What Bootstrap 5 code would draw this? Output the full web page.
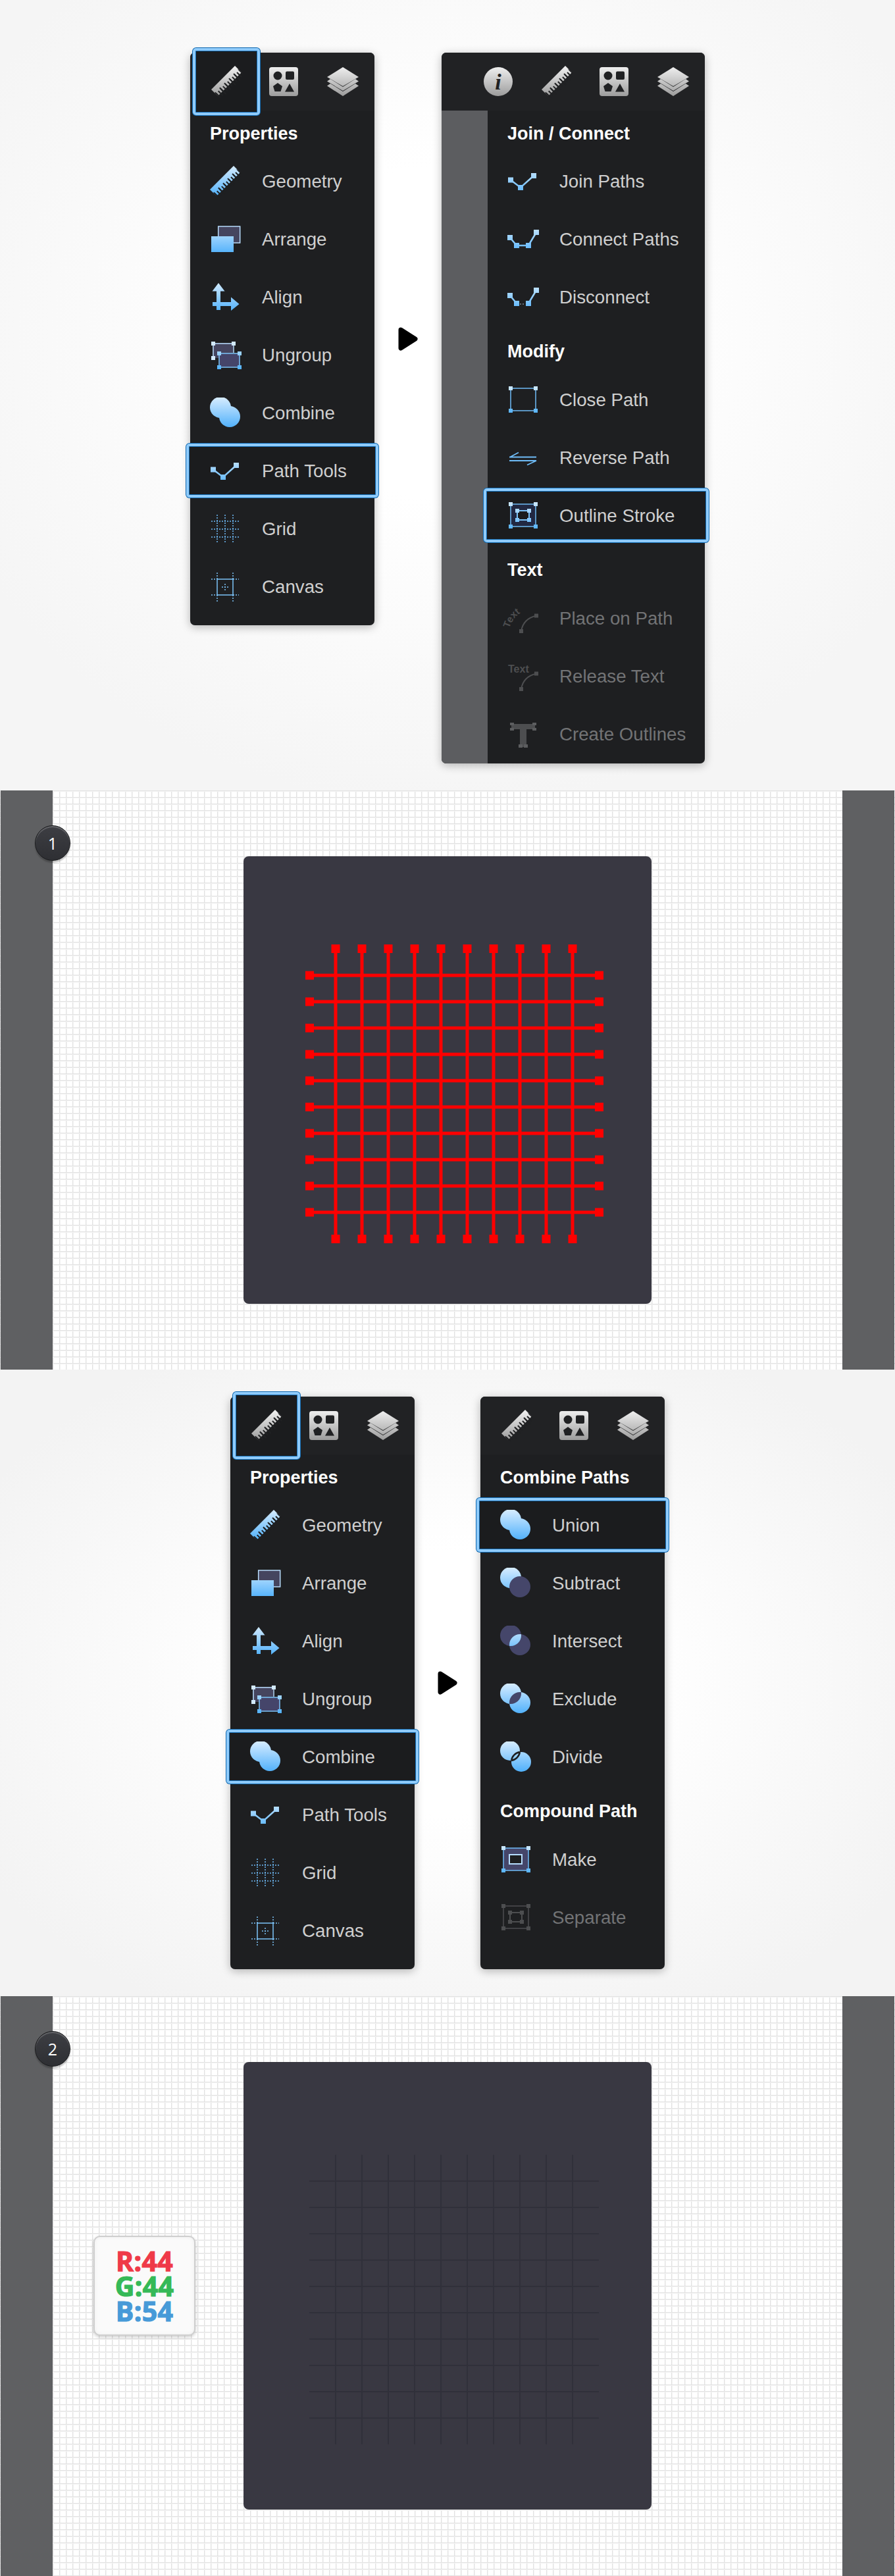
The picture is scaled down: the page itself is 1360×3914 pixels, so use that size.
<!DOCTYPE html>
<html lang="en">
<head>
  <meta charset="UTF-8">
  <title>Grid tutorial</title>
  <link rel="stylesheet" href="https://cdn.jsdelivr.net/npm/bootstrap@5.3.0/dist/css/bootstrap.min.css">
  <style>
    body { background: #f4f4f4; font-family: "Liberation Sans", Arial, sans-serif; }
    .icon-defs { position: absolute; width: 0; height: 0; }

    /* light blocks that hold the panels */
    .step-top { height: 1201px; padding-top: 80px; background: radial-gradient(ellipse 60% 60% at 50% 42%, #fff 35%, #f5f5f5 100%); }
    .step-mid { height: 952px; padding-top: 41px; background: radial-gradient(ellipse 60% 60% at 50% 50%, #fff 35%, #f3f3f3 100%); }

    /* panels */
    .tool-panel { background: #1e1f21; border-radius: 7px; box-shadow: 0 3px 14px rgba(0,0,0,.28); }
    .w-narrow { width: 280px; height: 870px; }
    .w-wide { width: 400px; height: 1080px; }
    .tab-bar { height: 88px; padding-right: 4px; background: #212224; border-radius: 7px 7px 0 0; }
    .tab-cell { width: 88px; height: 88px; }
    .tab-cell svg { width: 48px; height: 48px; }
    .gap-strip { width: 70px; background: #5c5d60; border-radius: 0 0 0 7px; }
    .tool-title { margin: 0; padding: 18px 0 11px 30px; height: 63px; font-size: 27px; line-height: 34px; font-weight: 700; color: #fff; }
    .tool-title.later { height: 68px; padding-top: 22px; padding-bottom: 12px; }
    .tool-row { --bs-list-group-bg: transparent; --bs-list-group-color: #cfcfcf; --bs-list-group-border-width: 0; height: 88px; padding: 1px 0 0 30px; font-size: 27.7px; display: flex; align-items: center; }
    .tool-row svg { width: 48px; height: 48px; margin-right: 31px; flex: none; overflow: visible; }
    .tool-row.off { --bs-list-group-color: #727375; }
    .picked { position: relative; isolation: isolate; }
    .picked::before { content: ""; position: absolute; z-index: -1; top: 3px; bottom: 3px; left: -6px; right: -6px; background: #1b1c1e; border: 4px solid #8fcbfa; border-radius: 5px; box-shadow: 0 0 0 1px #1069b1, inset 0 0 0 1px #1069b1; }
    .tab-cell.picked::before { top: -7px; bottom: -7px; left: -8px; right: -6px; }
    .go-arrow { height: 870px; }
    .gap-l { width: 102px; }
    .gap-s { width: 100px; }
    .go-arrow svg { width: 32px; height: 36px; }

    /* grid canvases */
    .grid-sheet { position: relative; background-color: #fff;
      background-image:
        linear-gradient(#e2e2e2 1px, #f3f3f3 1px, #f3f3f3 2px, transparent 2px),
        linear-gradient(90deg, #e2e2e2 1px, #f3f3f3 1px, #f3f3f3 2px, transparent 2px);
      background-size: 10px 10px; }
    .sheet-a { height: 880px; }
    .sheet-b { height: 881px; }
    .side-strip { width: 79px; background: #5f6062; }
    .side-strip.lft { margin-left: 1px; }
    .side-strip.rgt { margin-right: 1px; }
    .art-board { width: 620px; height: 680px; margin-top: 100px; background: #393842; border-radius: 8px; }
    .art-board svg { width: 620px; height: 680px; }
    .step-dot { position: absolute; left: 53px; top: 53px; width: 54px; height: 54px; background: linear-gradient(#3d3e43, #2e2f33); border: 1px solid #17181a; box-shadow: inset 0 2px 1px rgba(255,255,255,.22), 0 3px 2px rgba(0,0,0,.22); font: 400 25px "Open Sans", sans-serif; }
    .rgb-card { position: absolute; left: 142px; top: 364px; width: 155px; height: 152px; background: #fafafa; border: 2px solid #cfcfcf; border-radius: 10px; box-shadow: 0 2px 5px rgba(0,0,0,.2), inset 0 0 6px rgba(0,0,0,.05); font: 700 41px/38px "Open Sans", sans-serif; }
    .rgb-card div { -webkit-text-stroke: 1.2px; letter-spacing: .3px; }
    .rgb-r { color: #ef3a48; -webkit-text-stroke-color: #b9152a; }
    .rgb-g { color: #35b957; -webkit-text-stroke-color: #108a37; }
    .rgb-b { color: #479ad8; -webkit-text-stroke-color: #17629e; }
  </style>
</head>
<body>

<!-- shared icons -->
<svg class="icon-defs" xmlns="http://www.w3.org/2000/svg">
  <defs>
    <linearGradient id="bl" gradientUnits="userSpaceOnUse" x1="0" y1="0" x2="0" y2="46"><stop offset="0" stop-color="#d6ecff"/><stop offset="1" stop-color="#4fb0fb"/></linearGradient>
    <linearGradient id="gr" gradientUnits="userSpaceOnUse" x1="0" y1="0" x2="0" y2="46"><stop offset="0" stop-color="#f2f2f2"/><stop offset="1" stop-color="#9c9c9c"/></linearGradient>
    <clipPath id="c1"><circle cx="16" cy="15" r="16"/></clipPath>
    <clipPath id="c2"><circle cx="30" cy="29" r="16"/></clipPath>
    <clipPath id="d1"><circle cx="15" cy="14" r="15"/></clipPath>
    <clipPath id="d2"><circle cx="32" cy="31" r="15"/></clipPath>
  </defs>

  <!-- tabs -->
  <symbol id="t-ruler" viewBox="0 0 48 48">
    <path fill="url(#gr)" d="M0 36 36 0l10 10-36 36z"/>
    <path stroke="#202123" stroke-width="10" stroke-dasharray="2 3" d="M10 46 46 10"/>
    <path stroke="#202123" stroke-width="14" stroke-dasharray="2 8" d="M10 46 46 10"/>
  </symbol>
  <symbol id="t-shapes" viewBox="0 0 48 48">
    <rect y="2" width="44" height="44" rx="4" fill="url(#gr)"/>
    <circle cx="13" cy="15" r="6.500" fill="#202123"/>
    <rect x="25" y="8.500" width="13" height="12.500" rx="2" fill="#202123"/>
    <path fill="#202123" d="M13 26l7 5-2.500 8h-9L6 31z"/>
    <path fill="#202123" d="M31 27l7 12.500H24z"/>
  </symbol>
  <symbol id="t-layers" viewBox="0 0 48 48">
    <path fill="url(#gr)" d="M24 2l24 15-24 14L0 17z"/>
    <path fill="url(#gr)" d="M5 20l19 12 19-12 5 3.500L24 38 0 23.500z"/>
    <path fill="url(#gr)" d="M5 27l19 12 19-12 5 3.500L24 46 0 30.500z"/>
  </symbol>

  <!-- blue row icons -->
  <symbol id="i-ruler" viewBox="0 0 48 48">
    <path fill="url(#bl)" d="M0 36 36 0l10 10-36 36z"/>
    <path stroke="#1e1f21" stroke-width="10" stroke-dasharray="2 3" d="M10 46 46 10"/>
    <path stroke="#1e1f21" stroke-width="14" stroke-dasharray="2 8" d="M10 46 46 10"/>
  </symbol>
  <symbol id="i-arrange" viewBox="0 0 48 48">
    <rect x="12.700" y="4" width="33" height="25" fill="#45455f" stroke="#b8dcfb" stroke-width="1.500"/>
    <rect x="2" y="19" width="34" height="24" fill="url(#bl)"/>
  </symbol>
  <symbol id="i-align" viewBox="0 0 48 48">
    <path fill="url(#bl)" d="M13 2l9.500 12.500H16V31h16v-7.500L44.500 34 32 44v-7H16v6h-6v-6H4v-6h6V14.500H3.500z"/>
  </symbol>
  <symbol id="i-ungroup" viewBox="0 0 48 48">
    <path fill="#45455f" d="M4 5h31v16H17v7H4z"/>
    <path fill="none" stroke="#b8dcfb" stroke-width="1.500" d="M5 28V6h31v14"/>
    <path fill="#d2e9fd" d="M2 3h6v6H2zM33 3h6v6h-6zM2 25h6v6H2z"/>
    <rect x="14" y="21" width="31" height="21" fill="#45456a" stroke="#7cc3f8" stroke-width="1.500"/>
    <path fill="url(#bl)" d="M11 18h6v6h-6zM42 18h6v6h-6zM11 39h6v6h-6zM42 39h6v6h-6z"/>
  </symbol>
  <symbol id="i-combine" viewBox="0 0 48 48">
    <path stroke="url(#bl)" stroke-width="24" d="M16 15 30 29"/>
    <circle cx="16" cy="15" r="16" fill="url(#bl)"/>
    <circle cx="30" cy="29" r="16" fill="url(#bl)"/>
  </symbol>
  <symbol id="i-union" viewBox="0 0 48 48">
    <circle cx="16" cy="15" r="16" fill="url(#bl)"/>
    <circle cx="30" cy="29" r="16" fill="url(#bl)"/>
  </symbol>
  <symbol id="i-path" viewBox="0 0 48 48">
    <path fill="none" stroke="url(#bl)" stroke-width="2.500" d="M5 21.500 20 33 40 15"/>
    <path fill="url(#bl)" d="M1 17.500h8v8H1zM16 29h8v8h-8zM36 11h8v8h-8z"/>
  </symbol>
  <symbol id="i-grid" viewBox="0 0 48 48">
    <path fill="none" stroke="#6fbcf7" stroke-width="1.500" stroke-dasharray="2 2" d="M2 12h42M2 24h42M2 36h42M11 2v42M23 2v42M35 2v42"/>
  </symbol>
  <symbol id="i-canvas" viewBox="0 0 48 48">
    <path fill="none" stroke="#7cc3f8" stroke-width="1.500" d="M11 12h24v24H11z"/>
    <path fill="none" stroke="#7cc3f8" stroke-width="1.500" stroke-dasharray="2 2" d="M2 12h9M35 12h9M2 36h9M35 36h9M11 2v10M35 2v10M11 36v10M35 36v10M18 24h10M23 19v10"/>
  </symbol>
  <symbol id="i-connect" viewBox="0 0 48 48">
    <path fill="none" stroke="url(#bl)" stroke-width="2.500" d="M4 21 14 33h18L44 13"/>
    <path fill="url(#bl)" d="M0 17h8v8H0zM10 29h8v8h-8zM28 29h8v8h-8zM40 9h8v8h-8z"/>
  </symbol>
  <symbol id="i-disconnect" viewBox="0 0 48 48">
    <path fill="none" stroke="url(#bl)" stroke-width="2.500" d="M4 21 14 33M32 33 44 13"/>
    <path fill="none" stroke="#7b8c9b" stroke-width="1.500" stroke-dasharray="2 2" d="M19 34h8"/>
    <path fill="url(#bl)" d="M0 17h8v8H0zM10 29h8v8h-8zM28 29h8v8h-8zM40 9h8v8h-8z"/>
  </symbol>
  <symbol id="i-close" viewBox="0 0 48 48">
    <rect x="5" y="6" width="38" height="34" fill="none" stroke="#6fbcf7" stroke-width="1.500"/>
    <path fill="url(#bl)" d="M2 3h6v6H2zM40 3h6v6h-6zM2 37h6v6H2zM40 37h6v6h-6z"/>
  </symbol>
  <symbol id="i-reverse" viewBox="0 0 48 48">
    <path fill="none" stroke="#6fbcf7" stroke-width="1.800" d="M3 22.500h41M4 22.500 17 15.500M3 28h41M44 28 30 34.500"/>
  </symbol>
  <symbol id="i-outline" viewBox="0 0 48 48">
    <rect x="5" y="6" width="38" height="34" fill="#212842" stroke="#6fbcf7" stroke-width="1.500"/>
    <rect x="15" y="16" width="18" height="14" fill="#1b1c1e" stroke="#7cc3f8" stroke-width="2"/>
    <path fill="url(#bl)" d="M2 3h6v6H2zM40 3h6v6h-6zM2 37h6v6H2zM40 37h6v6h-6zM12 13h6v6h-6zM30 13h6v6h-6zM12 27h6v6h-6zM30 27h6v6h-6z"/>
  </symbol>
  <symbol id="i-subtract" viewBox="0 0 48 48">
    <circle cx="16" cy="15" r="16" fill="url(#bl)"/>
    <circle cx="30" cy="29" r="16" fill="#45466a"/>
  </symbol>
  <symbol id="i-intersect" viewBox="0 0 48 48">
    <circle cx="16" cy="15" r="16" fill="#45466a"/>
    <circle cx="30" cy="29" r="16" fill="#45466a"/>
    <circle cx="30" cy="29" r="16" fill="url(#bl)" clip-path="url(#c1)"/>
  </symbol>
  <symbol id="i-exclude" viewBox="0 0 48 48">
    <circle cx="16" cy="15" r="16" fill="url(#bl)"/>
    <circle cx="30" cy="29" r="16" fill="url(#bl)"/>
    <circle cx="30" cy="29" r="16" fill="#45466a" clip-path="url(#c1)"/>
  </symbol>
  <symbol id="i-divide" viewBox="0 0 48 48">
    <circle cx="15" cy="14" r="15" fill="url(#bl)"/>
    <circle cx="32" cy="31" r="15" fill="url(#bl)"/>
    <circle cx="15" cy="14" r="15" fill="none" stroke="#1e1f21" stroke-width="2.500" clip-path="url(#d2)"/>
    <circle cx="32" cy="31" r="15" fill="none" stroke="#1e1f21" stroke-width="2.500" clip-path="url(#d1)"/>
  </symbol>
  <symbol id="i-make" viewBox="0 0 48 48">
    <rect x="5" y="6" width="38" height="34" fill="#45466a" stroke="#6fbcf7" stroke-width="1.500"/>
    <rect x="14" y="16" width="19" height="14" fill="#1e1f21" stroke="#b5dcfc" stroke-width="2"/>
    <path fill="url(#bl)" d="M2 3h6v6H2zM40 3h6v6h-6zM2 37h6v6H2zM40 37h6v6h-6z"/>
  </symbol>

  <!-- disabled row icons -->
  <symbol id="x-separate" viewBox="0 0 48 48">
    <rect x="5" y="6" width="38" height="34" fill="none" stroke="#4d4e50" stroke-width="1.500"/>
    <rect x="15" y="16" width="18" height="14" fill="none" stroke="#4d4e50" stroke-width="2"/>
    <path fill="#4d4e50" d="M2 3h6v6H2zM40 3h6v6h-6zM2 37h6v6H2zM40 37h6v6h-6zM12 13h6v6h-6zM30 13h6v6h-6zM12 27h6v6h-6zM30 27h6v6h-6z"/>
  </symbol>
  <symbol id="x-curve" viewBox="0 0 48 48">
    <path fill="none" stroke="#4d4e50" stroke-width="2" d="M21 43Q24 24 44 19.500"/>
    <path fill="#4d4e50" d="M18 40h6v6h-6zM41 16.500h6v6h-6z"/>
  </symbol>
  <symbol id="x-outlines" viewBox="0 0 48 48">
    <path fill="#4d4e50" d="M6 8h36v8H29v27H19V16H6z"/>
    <path fill="#5c5d5f" d="M4 6h6v4H4zM38 6h6v4h-6zM4 14h6v4H4zM38 14h6v4h-6zM17 39h6v5h-6zM25 39h6v5h-6z"/>
  </symbol>
</svg>

<!-- step 1 panels -->
<div class="step-top d-flex justify-content-center align-items-start">
  <div class="tool-panel w-narrow">
    <div class="tab-bar d-flex justify-content-end">
      <div class="tab-cell picked d-flex align-items-center justify-content-center"><svg><use href="#t-ruler"/></svg></div>
      <div class="tab-cell d-flex align-items-center justify-content-center"><svg><use href="#t-shapes"/></svg></div>
      <div class="tab-cell d-flex align-items-center justify-content-center"><svg><use href="#t-layers"/></svg></div>
    </div>
    <div class="list-group list-group-flush">
      <h3 class="tool-title">Properties</h3>
      <div class="list-group-item tool-row"><svg><use href="#i-ruler"/></svg>Geometry</div>
      <div class="list-group-item tool-row"><svg><use href="#i-arrange"/></svg>Arrange</div>
      <div class="list-group-item tool-row"><svg><use href="#i-align"/></svg>Align</div>
      <div class="list-group-item tool-row"><svg><use href="#i-ungroup"/></svg>Ungroup</div>
      <div class="list-group-item tool-row"><svg><use href="#i-combine"/></svg>Combine</div>
      <div class="list-group-item tool-row picked"><svg><use href="#i-path"/></svg>Path Tools</div>
      <div class="list-group-item tool-row"><svg><use href="#i-grid"/></svg>Grid</div>
      <div class="list-group-item tool-row"><svg><use href="#i-canvas"/></svg>Canvas</div>
    </div>
  </div>

  <div class="go-arrow gap-l d-flex align-items-center justify-content-center">
    <svg viewBox="0 0 32 36"><path d="M5 4 27 18 5 32z" fill="#000" stroke="#000" stroke-width="7" stroke-linejoin="round"/></svg>
  </div>

  <div class="tool-panel w-wide d-flex flex-column">
    <div class="tab-bar d-flex justify-content-end">
      <div class="tab-cell d-flex align-items-center justify-content-center">
        <svg viewBox="0 0 48 48">
          <circle cx="22" cy="24" r="22" fill="url(#gr)"/>
          <text x="22" y="36" text-anchor="middle" font-family="Liberation Serif" font-style="italic" font-weight="700" font-size="34" fill="#202123">i</text>
        </svg>
      </div>
      <div class="tab-cell d-flex align-items-center justify-content-center"><svg><use href="#t-ruler"/></svg></div>
      <div class="tab-cell d-flex align-items-center justify-content-center"><svg><use href="#t-shapes"/></svg></div>
      <div class="tab-cell d-flex align-items-center justify-content-center"><svg><use href="#t-layers"/></svg></div>
    </div>
    <div class="d-flex flex-grow-1">
      <div class="gap-strip"></div>
      <div class="list-group list-group-flush flex-grow-1">
        <h3 class="tool-title">Join / Connect</h3>
        <div class="list-group-item tool-row"><svg><use href="#i-path"/></svg>Join Paths</div>
        <div class="list-group-item tool-row"><svg><use href="#i-connect"/></svg>Connect Paths</div>
        <div class="list-group-item tool-row"><svg><use href="#i-disconnect"/></svg>Disconnect</div>
        <h3 class="tool-title later">Modify</h3>
        <div class="list-group-item tool-row"><svg><use href="#i-close"/></svg>Close Path</div>
        <div class="list-group-item tool-row"><svg><use href="#i-reverse"/></svg>Reverse Path</div>
        <div class="list-group-item tool-row picked"><svg><use href="#i-outline"/></svg>Outline Stroke</div>
        <h3 class="tool-title later">Text</h3>
        <div class="list-group-item tool-row off">
          <svg viewBox="0 0 48 48">
            <use href="#x-curve"/>
            <path id="placeCurve" fill="none" d="M3 39Q10 14 38 8"/>
            <text font-size="15" font-weight="700" font-family="Liberation Sans" fill="#4d4e50"><textPath href="#placeCurve">Text</textPath></text>
          </svg>
          Place on Path
        </div>
        <div class="list-group-item tool-row off">
          <svg viewBox="0 0 48 48">
            <use href="#x-curve"/>
            <text x="1" y="18" font-size="16" font-weight="700" font-family="Liberation Sans" fill="#4d4e50">Text</text>
          </svg>
          Release Text
        </div>
        <div class="list-group-item tool-row off"><svg><use href="#x-outlines"/></svg>Create Outlines</div>
      </div>
    </div>
  </div>
</div>

<!-- step 1 canvas -->
<div class="grid-sheet sheet-a d-flex">
  <div class="side-strip lft"></div>
  <div class="flex-grow-1 d-flex justify-content-center">
    <div class="art-board"><svg id="gridRed"></svg></div>
  </div>
  <div class="side-strip rgt"></div>
  <div class="step-dot rounded-circle text-white d-flex align-items-center justify-content-center">1</div>
</div>

<!-- step 2 panels -->
<div class="step-mid d-flex justify-content-center align-items-start">
  <div class="tool-panel w-narrow">
    <div class="tab-bar d-flex justify-content-end">
      <div class="tab-cell picked d-flex align-items-center justify-content-center"><svg><use href="#t-ruler"/></svg></div>
      <div class="tab-cell d-flex align-items-center justify-content-center"><svg><use href="#t-shapes"/></svg></div>
      <div class="tab-cell d-flex align-items-center justify-content-center"><svg><use href="#t-layers"/></svg></div>
    </div>
    <div class="list-group list-group-flush">
      <h3 class="tool-title">Properties</h3>
      <div class="list-group-item tool-row"><svg><use href="#i-ruler"/></svg>Geometry</div>
      <div class="list-group-item tool-row"><svg><use href="#i-arrange"/></svg>Arrange</div>
      <div class="list-group-item tool-row"><svg><use href="#i-align"/></svg>Align</div>
      <div class="list-group-item tool-row"><svg><use href="#i-ungroup"/></svg>Ungroup</div>
      <div class="list-group-item tool-row picked"><svg><use href="#i-combine"/></svg>Combine</div>
      <div class="list-group-item tool-row"><svg><use href="#i-path"/></svg>Path Tools</div>
      <div class="list-group-item tool-row"><svg><use href="#i-grid"/></svg>Grid</div>
      <div class="list-group-item tool-row"><svg><use href="#i-canvas"/></svg>Canvas</div>
    </div>
  </div>

  <div class="go-arrow gap-s d-flex align-items-center justify-content-center">
    <svg viewBox="0 0 32 36"><path d="M5 4 27 18 5 32z" fill="#000" stroke="#000" stroke-width="7" stroke-linejoin="round"/></svg>
  </div>

  <div class="tool-panel w-narrow">
    <div class="tab-bar d-flex justify-content-end">
      <div class="tab-cell d-flex align-items-center justify-content-center"><svg><use href="#t-ruler"/></svg></div>
      <div class="tab-cell d-flex align-items-center justify-content-center"><svg><use href="#t-shapes"/></svg></div>
      <div class="tab-cell d-flex align-items-center justify-content-center"><svg><use href="#t-layers"/></svg></div>
    </div>
    <div class="list-group list-group-flush">
      <h3 class="tool-title">Combine Paths</h3>
      <div class="list-group-item tool-row picked"><svg><use href="#i-union"/></svg>Union</div>
      <div class="list-group-item tool-row"><svg><use href="#i-subtract"/></svg>Subtract</div>
      <div class="list-group-item tool-row"><svg><use href="#i-intersect"/></svg>Intersect</div>
      <div class="list-group-item tool-row"><svg><use href="#i-exclude"/></svg>Exclude</div>
      <div class="list-group-item tool-row"><svg><use href="#i-divide"/></svg>Divide</div>
      <h3 class="tool-title later">Compound Path</h3>
      <div class="list-group-item tool-row"><svg><use href="#i-make"/></svg>Make</div>
      <div class="list-group-item tool-row off"><svg><use href="#x-separate"/></svg>Separate</div>
    </div>
  </div>
</div>

<!-- step 2 canvas -->
<div class="grid-sheet sheet-b d-flex">
  <div class="side-strip lft"></div>
  <div class="flex-grow-1 d-flex justify-content-center">
    <div class="art-board"><svg id="gridDark"></svg></div>
  </div>
  <div class="side-strip rgt"></div>
  <div class="step-dot rounded-circle text-white d-flex align-items-center justify-content-center">2</div>
  <div class="rgb-card d-flex flex-column align-items-center justify-content-center">
    <div class="rgb-r">R:44</div>
    <div class="rgb-g">G:44</div>
    <div class="rgb-b">B:54</div>
  </div>
</div>

<script src="https://cdn.jsdelivr.net/npm/bootstrap@5.3.0/dist/js/bootstrap.bundle.min.js"></script>
<script>
  // ten lines each way, 40px apart
  function drawGrid(id, color, weight, nodes) {
    const svg = document.getElementById(id);
    let out = "";
    for (let i = 0; i < 10; i++) {
      const x = 140 + i * 40;
      const y = 181 + i * 40;
      out += `<rect x="${x - weight / 2}" y="141" width="${weight}" height="440" fill="${color}"/>`;
      out += `<rect x="100" y="${y - weight / 2}" width="440" height="${weight}" fill="${color}"/>`;
      if (nodes) {
        out += `<rect x="${x - 6.5}" y="134" width="13" height="13" fill="${color}"/>`;
        out += `<rect x="${x - 6.5}" y="575" width="13" height="13" fill="${color}"/>`;
        out += `<rect x="94" y="${y - 6.5}" width="13" height="13" fill="${color}"/>`;
        out += `<rect x="534" y="${y - 6.5}" width="13" height="13" fill="${color}"/>`;
      }
    }
    svg.innerHTML = out;
  }
  drawGrid("gridRed", "#ff0000", 5, true);
  drawGrid("gridDark", "#30303a", 2, false);
</script>
</body>
</html>
